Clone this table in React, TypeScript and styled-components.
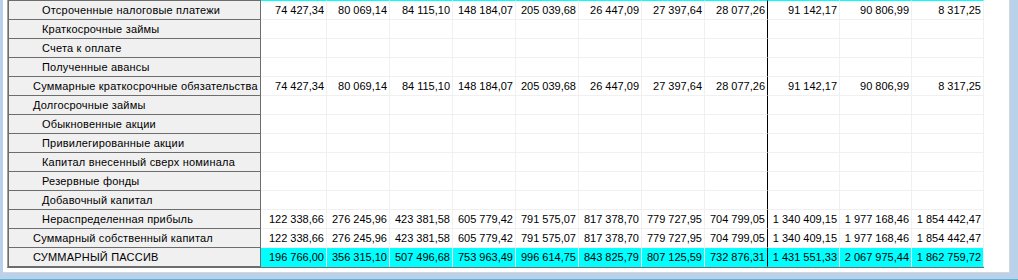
import React from 'react';
import styled, { createGlobalStyle } from 'styled-components';

const GlobalStyle = createGlobalStyle`
  html, body {
    margin: 0;
    padding: 0;
    background: #b9d1ea;
  }
  body {
    font-family: "Liberation Sans", Arial, sans-serif;
    font-size: 11px;
    color: #000;
  }
`;

const COLS = '252px 66px repeat(7, 63px) repeat(3, 72px)';

type Row = { label: string; indent?: boolean; total?: boolean; values?: string[] };

const v1 = ['74 427,34', '80 069,14', '84 115,10', '148 184,07', '205 039,68', '26 447,09', '27 397,64', '28 077,26', '91 142,17', '90 806,99', '8 317,25'];
const v2 = ['122 338,66', '276 245,96', '423 381,58', '605 779,42', '791 575,07', '817 378,70', '779 727,95', '704 799,05', '1 340 409,15', '1 977 168,46', '1 854 442,47'];
const v3 = ['196 766,00', '356 315,10', '507 496,68', '753 963,49', '996 614,75', '843 825,79', '807 125,59', '732 876,31', '1 431 551,33', '2 067 975,44', '1 862 759,72'];

const rows: Row[] = [
  { label: 'Отсроченные налоговые платежи', indent: true, values: v1 },
  { label: 'Краткосрочные займы', indent: true },
  { label: 'Счета к оплате', indent: true },
  { label: 'Полученные авансы', indent: true },
  { label: 'Суммарные краткосрочные обязательства', values: v1 },
  { label: 'Долгосрочные займы' },
  { label: 'Обыкновенные акции', indent: true },
  { label: 'Привилегированные акции', indent: true },
  { label: 'Капитал внесенный сверх номинала', indent: true },
  { label: 'Резервные фонды', indent: true },
  { label: 'Добавочный капитал', indent: true },
  { label: 'Нераспределенная прибыль', indent: true, values: v2 },
  { label: 'Суммарный собственный капитал', values: v2 },
  { label: 'СУММАРНЫЙ ПАССИВ', total: true, values: v3 },
];

const Frame = styled.div`
  width: 1018px;
  height: 280px;
  box-sizing: border-box;
  display: flex;
  padding: 0 8px 6px 3px;
  border-bottom: 1px solid #5cb3cc;
`;

const Panel = styled.div`
  flex: 1;
  box-sizing: border-box;
  background: #fff;
  padding-left: 4px;
  border-right: 1px solid #d6d6d6;
  border-bottom: 1px solid #d6d6d6;
  display: flex;
  align-items: flex-start;
`;

const Viewport = styled.div`
  height: 268px;
  box-sizing: border-box;
  overflow: hidden;
  border-left: 1px solid #a0a0a0;
  border-bottom: 1px solid #6d6d6d;
`;

// scrolled grid: only the bottom line of the row above is still visible
const Grid = styled.div`
  border-left: 1px solid #6d6d6d;
  margin-top: -18px;
`;

const GridRow = styled.div`
  display: grid;
  grid-template-columns: ${COLS};
`;

const HeadCell = styled.div<{ $indent?: boolean }>`
  box-sizing: border-box;
  height: 19px;
  line-height: 18px;
  padding-left: ${(p) => (p.$indent ? 33 : 24)}px;
  letter-spacing: 0.2px;
  background: #f0f0f0;
  border-right: 1px solid #6d6d6d;
  border-bottom: 1px solid #6d6d6d;
  white-space: nowrap;
  overflow: hidden;
`;

const DataCell = styled.div<{ $total?: boolean; $split?: boolean }>`
  box-sizing: border-box;
  height: 19px;
  line-height: 18px;
  padding-right: 2px;
  text-align: right;
  white-space: nowrap;
  overflow: hidden;
  background: ${(p) => (p.$total ? '#00ffff' : '#fff')};
  border-right: 1px solid ${(p) => (p.$split ? '#000' : '#f0f0f0')};
  border-bottom: 1px solid ${(p) => (p.$total ? '#00ffff' : '#f0f0f0')};
`;

const renderRow = (r: Row, key: string | number) => (
  <GridRow key={key}>
    <HeadCell $indent={r.indent}>{r.label}</HeadCell>
    {Array.from({ length: 11 }).map((_, i) => (
      <DataCell key={i} $total={r.total} $split={i === 7}>
        {r.values ? r.values[i] : ''}
      </DataCell>
    ))}
  </GridRow>
);

const App = () => (
  <>
    <GlobalStyle />
    <Frame>
      <Panel>
        <Viewport>
          <Grid>
            {renderRow({ label: '', total: true }, 'prev')}
            {rows.map((r, i) => renderRow(r, i))}
          </Grid>
        </Viewport>
      </Panel>
    </Frame>
  </>
);

export default App;
